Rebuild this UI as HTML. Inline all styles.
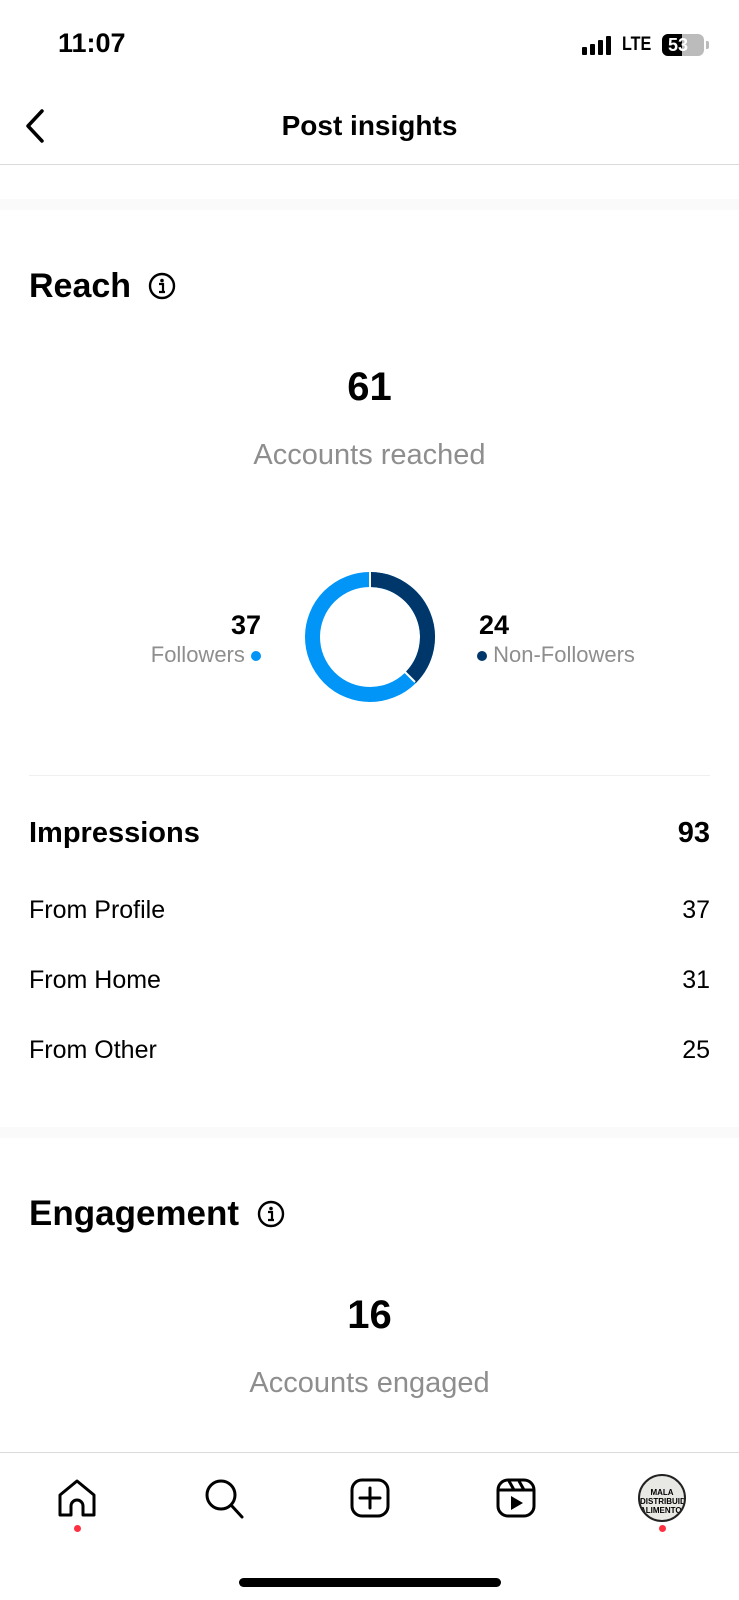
<!DOCTYPE html>
<html><head><meta charset="utf-8"><style>
*{margin:0;padding:0;box-sizing:border-box}
body{width:739px;height:1600px;background:#fff;font-family:"Liberation Sans",sans-serif;color:#000;position:relative;overflow:hidden}
.a{position:absolute;white-space:nowrap}
.c{left:0;width:739px;text-align:center}
.b{font-weight:bold}
.g{color:#8e8e8e}
</style></head><body>
<div class="a b" style="left:58px;top:28px;font-size:27px">11:07</div>
<div class="a" style="left:582px;top:36px;display:flex;align-items:flex-end;gap:3px">
<div style="width:5px;height:8px;background:#000;border-radius:1px"></div>
<div style="width:5px;height:11px;background:#000;border-radius:1px"></div>
<div style="width:5px;height:15px;background:#000;border-radius:1px"></div>
<div style="width:5px;height:19px;background:#000;border-radius:1px"></div>
</div>
<div class="a b" style="left:622px;top:34px;font-size:19px;transform:scaleX(.85);transform-origin:left">LTE</div>
<div class="a" style="left:662px;top:34px;width:42px;height:22px;border-radius:6px;background:#bbb;overflow:hidden"><div style="width:20px;height:22px;background:#000"></div><span class="a b" style="left:6px;top:1px;font-size:18px;color:#fff">53</span></div>
<div class="a" style="left:706px;top:41px;width:3px;height:8px;background:#bbb;border-radius:0 2px 2px 0"></div>

<svg class="a" style="left:22px;top:108px" width="26" height="36" viewBox="0 0 26 36"><path d="M20 3 L6 18 L20 33" fill="none" stroke="#000" stroke-width="3.5" stroke-linecap="round" stroke-linejoin="round"/></svg>
<div class="a c b" style="top:110px;font-size:28px">Post insights</div>
<div class="a" style="left:0;top:164px;width:739px;height:1px;background:#dbdbdb"></div>
<div class="a" style="left:0;top:199px;width:739px;height:11px;background:#fafafa"></div>

<div class="a b" style="left:29px;top:267px;font-size:34px">Reach</div>
<svg class="a" style="left:148px;top:272px" width="28" height="28" viewBox="0 0 28 28"><circle cx="14" cy="14" r="12" fill="none" stroke="#000" stroke-width="2.4"/><circle cx="14" cy="8.5" r="1.8"/><path d="M11 12h4v7.5M11 20h6" fill="none" stroke="#000" stroke-width="2.2"/></svg>
<div class="a c b" style="top:365px;font-size:40px">61</div>
<div class="a c g" style="top:439px;font-size:29px">Accounts reached</div>

<svg class="a" style="left:303px;top:570px" width="134" height="134" viewBox="0 0 134 134"><circle cx="67" cy="67" r="57.5" fill="none" stroke="#0095f6" stroke-width="15"/><path d="M67 9.5 A57.5 57.5 0 0 1 107.6 107.7" fill="none" stroke="#00376b" stroke-width="15"/><line x1="67" y1="0" x2="67" y2="20" stroke="#fff" stroke-width="2"/><line x1="112" y1="112" x2="98" y2="98" stroke="#fff" stroke-width="2"/></svg>
<div class="a b" style="right:478px;top:610px;font-size:27px">37</div>
<div class="a g" style="right:478px;top:642px;font-size:22px">Followers <span style="display:inline-block;width:10px;height:10px;border-radius:50%;background:#0095f6;vertical-align:1px"></span></div>
<div class="a b" style="left:479px;top:610px;font-size:27px">24</div>
<div class="a g" style="left:477px;top:642px;font-size:22px"><span style="display:inline-block;width:10px;height:10px;border-radius:50%;background:#00376b;vertical-align:1px"></span> Non-Followers</div>

<div class="a" style="left:29px;top:775px;width:681px;height:1px;background:#efefef"></div>
<div class="a b" style="left:29px;top:817px;font-size:29px">Impressions</div>
<div class="a b" style="right:29px;top:817px;font-size:29px">93</div>
<div class="a" style="left:29px;top:896px;font-size:25px">From Profile</div><div class="a" style="right:29px;top:896px;font-size:25px">37</div>
<div class="a" style="left:29px;top:966px;font-size:25px">From Home</div><div class="a" style="right:29px;top:966px;font-size:25px">31</div>
<div class="a" style="left:29px;top:1036px;font-size:25px">From Other</div><div class="a" style="right:29px;top:1036px;font-size:25px">25</div>
<div class="a" style="left:0;top:1127px;width:739px;height:11px;background:#fafafa"></div>

<div class="a b" style="left:29px;top:1194px;font-size:35px">Engagement</div>
<svg class="a" style="left:257px;top:1200px" width="28" height="28" viewBox="0 0 28 28"><circle cx="14" cy="14" r="12" fill="none" stroke="#000" stroke-width="2.4"/><circle cx="14" cy="8.5" r="1.8"/><path d="M11 12h4v7.5M11 20h6" fill="none" stroke="#000" stroke-width="2.2"/></svg>
<div class="a c b" style="top:1293px;font-size:40px">16</div>
<div class="a c g" style="top:1367px;font-size:29px">Accounts engaged</div>

<div class="a" style="left:0;top:1452px;width:739px;height:1px;background:#dbdbdb"></div>
<svg class="a" style="left:57px;top:1478px" width="40" height="40" viewBox="0 0 40 40"><path d="M3 37 V17 L20 3 L37 17 V37 H26 V28 A6 6 0 0 0 14 28 V37 Z" fill="none" stroke="#000" stroke-width="3" stroke-linejoin="round"/></svg>
<div class="a" style="left:74px;top:1525px;width:7px;height:7px;border-radius:50%;background:#ff3040"></div>
<svg class="a" style="left:204px;top:1478px" width="42" height="42" viewBox="0 0 42 42"><circle cx="17" cy="17" r="14" fill="none" stroke="#000" stroke-width="3"/><path d="M27 27 L38 39" stroke="#000" stroke-width="3" stroke-linecap="round"/></svg>
<svg class="a" style="left:350px;top:1478px" width="40" height="40" viewBox="0 0 40 40"><rect x="2" y="2" width="36" height="36" rx="10" fill="none" stroke="#000" stroke-width="3"/><path d="M20 10V30M10 20H30" stroke="#000" stroke-width="3" stroke-linecap="round"/></svg>
<svg class="a" style="left:496px;top:1478px" width="40" height="40" viewBox="0 0 40 40"><rect x="2" y="2" width="36" height="36" rx="10" fill="none" stroke="#000" stroke-width="3"/><path d="M3 12H37M13 3L18 12M23 3L28 12" stroke="#000" stroke-width="3"/><path d="M15 18 V32 L27 25 Z" fill="#000"/></svg>
<div class="a" style="left:638px;top:1474px;width:48px;height:48px;border-radius:50%;background:#e8e8e4;border:2px solid #222;font-size:8px;font-weight:bold;text-align:center;line-height:9px;padding-top:12px;overflow:hidden">MALA<br>DISTRIBUIDORA DE<br>ALIMENTOS</div>
<div class="a" style="left:659px;top:1525px;width:7px;height:7px;border-radius:50%;background:#ff3040"></div>
<div class="a" style="left:239px;top:1578px;width:262px;height:9px;border-radius:5px;background:#000"></div>
</body></html>
